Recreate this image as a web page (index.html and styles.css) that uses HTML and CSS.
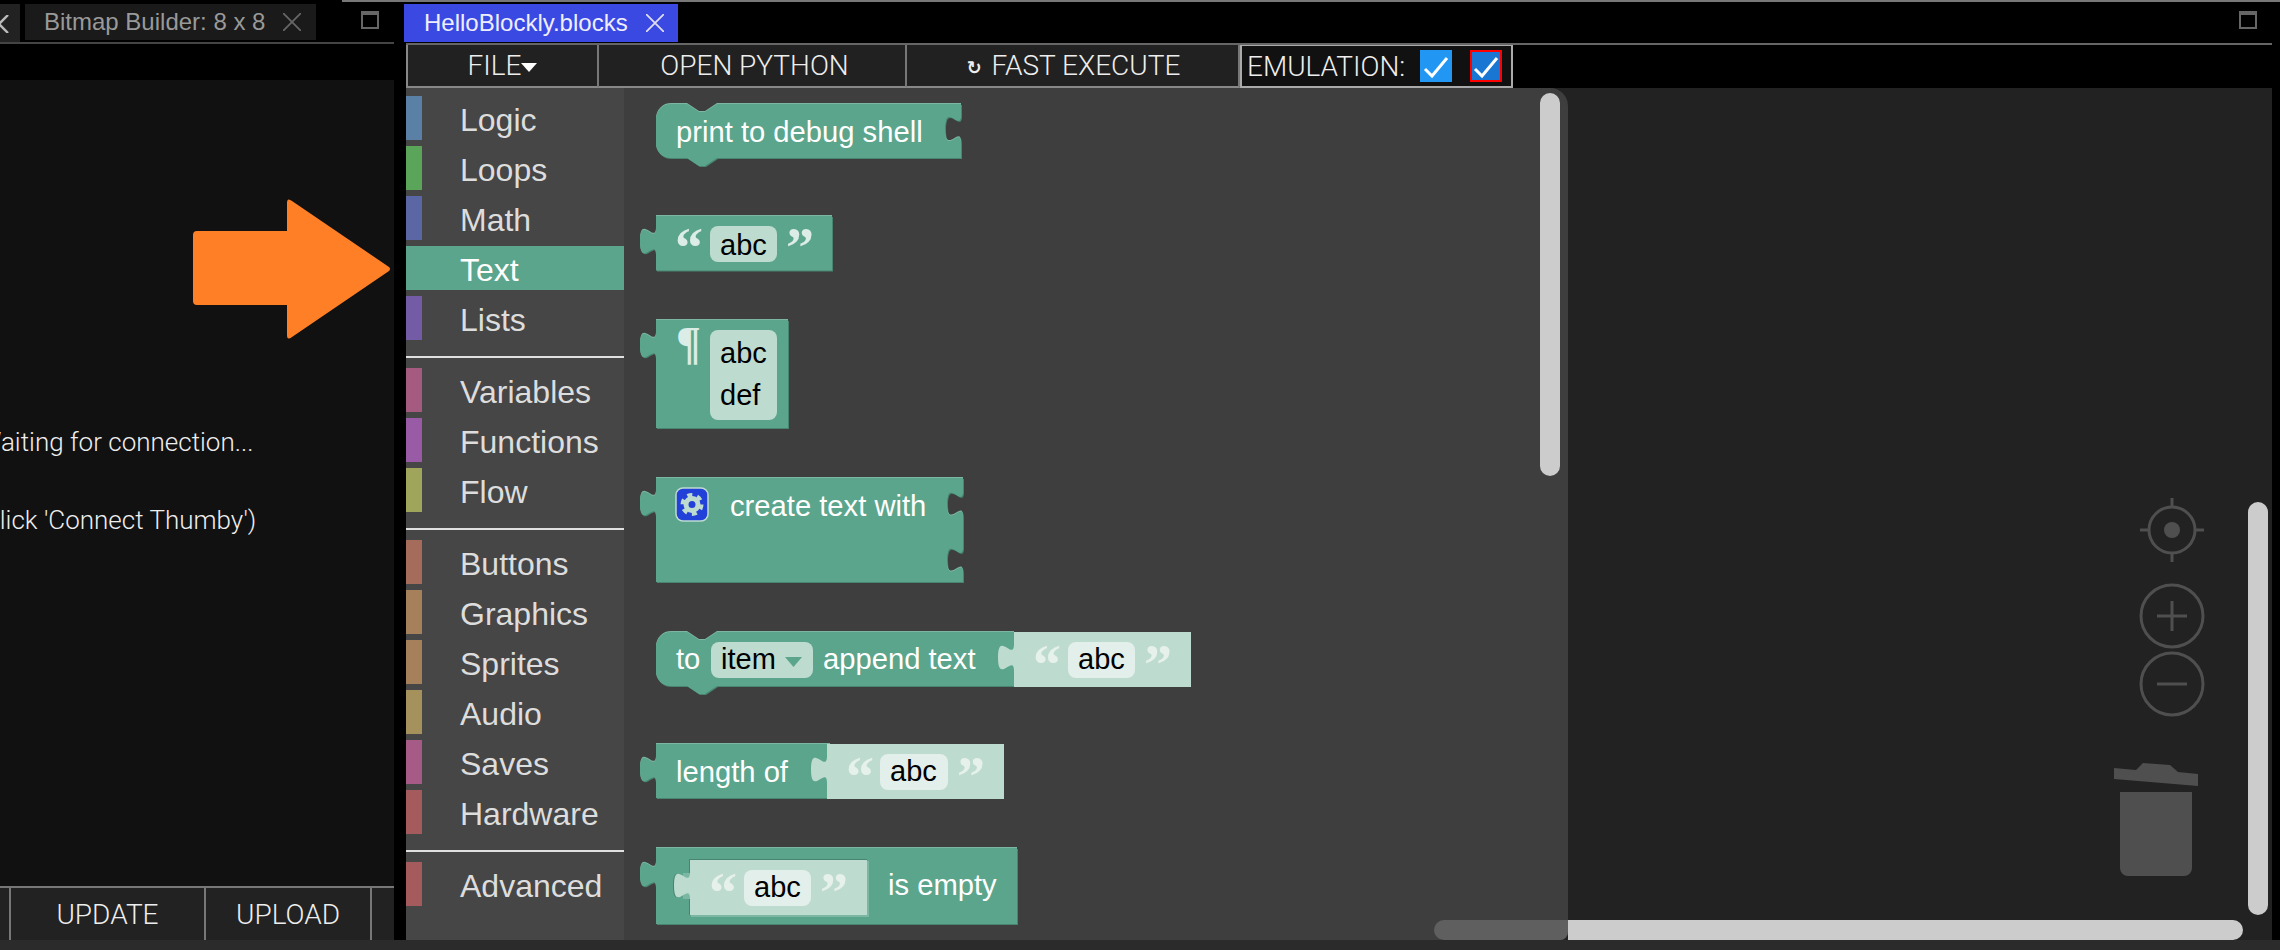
FILE: index.html
```html
<!DOCTYPE html>
<html lang="en">
<head>
<meta charset="utf-8">
<title>HelloBlockly.blocks</title>
<link rel="stylesheet" href="styles.css">
</head>
<body>
<div class="app">
  <div class="topline"></div>
  <main class="main">
    <section class="left">
      <div class="tabs left-tabs">
        <div class="tab-frag"><svg class="x-icon x-dim" viewBox="0 0 18 18"><path d="M-10 0L8 18M8 0L-10 18"/></svg></div>
        <div class="tab tab-dim"><span>Bitmap Builder: 8 x 8</span><svg class="x-icon x-dim" viewBox="0 0 18 18"><path d="M0 0L18 18M18 0L0 18"/></svg></div>
        <div class="maxbtn maxbtn-left"></div>
      </div>
      <div class="strip"></div>
      <div class="console">
        <p>Waiting for connection...</p>
        <p>(click 'Connect Thumby')</p>
      </div>
      <div class="actions">
        <div class="action action-stub"></div>
        <div class="action action-update">UPDATE</div>
        <div class="action action-upload">UPLOAD</div>
      </div>
    </section>

    <section class="right">
      <div class="tabs right-tabs">
        <div class="tab tab-active"><span>HelloBlockly.blocks</span><svg class="x-icon x-bright" viewBox="0 0 18 18"><path d="M0 0L18 18M18 0L0 18"/></svg></div>
        <div class="maxbtn maxbtn-right"></div>
      </div>
      <div class="toolbar">
        <div class="cell cell-file">FILE<span class="caret"></span></div>
        <div class="cell cell-python">OPEN PYTHON</div>
        <div class="cell cell-fast"><span class="redo">↻</span> FAST EXECUTE</div>
        <div class="cell cell-emu">
          <span class="emu-label">EMULATION:</span>
          <span class="check check-a"><svg viewBox="0 0 32 32"><path d="M5 19l7 7L27 8"/></svg></span>
          <span class="check check-b"><svg viewBox="0 0 28 28"><path d="M3 17l7 7L25 6"/></svg></span>
        </div>
      </div>
      <div class="editor">
        <nav class="toolbox">
          <div class="cat"><i class="sw c-logic"></i>Logic</div>
          <div class="cat"><i class="sw c-loops"></i>Loops</div>
          <div class="cat"><i class="sw c-math"></i>Math</div>
          <div class="cat cat-on">Text</div>
          <div class="cat"><i class="sw c-lists"></i>Lists</div>
          <div class="sep"></div>
          <div class="cat"><i class="sw c-vars"></i>Variables</div>
          <div class="cat"><i class="sw c-funcs"></i>Functions</div>
          <div class="cat"><i class="sw c-flow"></i>Flow</div>
          <div class="sep"></div>
          <div class="cat"><i class="sw c-btn"></i>Buttons</div>
          <div class="cat"><i class="sw c-gfx"></i>Graphics</div>
          <div class="cat"><i class="sw c-spr"></i>Sprites</div>
          <div class="cat"><i class="sw c-aud"></i>Audio</div>
          <div class="cat"><i class="sw c-sav"></i>Saves</div>
          <div class="cat"><i class="sw c-hw"></i>Hardware</div>
          <div class="sep"></div>
          <div class="cat"><i class="sw c-adv"></i>Advanced</div>
        </nav>

        <div class="flyout">
          <svg class="blocks" viewBox="624 88 944 852" width="944" height="852">
            <defs>
              <path id="b1" d="M656 119a15 15 0 0 1 15-15H687l12 8 6 0 12-8H961V115c0 18-16-14-16 14s16-4 16 14V158H717l-12 8-6 0-12-8H671a14 14 0 0 1-15-14z"/>
              <path id="b2" d="M656 216H832V270.500H656V255c0-18-16 14-16-13.500s16 4.500 16-13.500z"/>
              <path id="b3" d="M656 320H788V428H656V359c0-18-16 14-16-13.500s16 4.500 16-13.500z"/>
              <path id="b4" d="M656 478H963V491c0 18-16-14-16 13s16-4 16 13V547c0 18-16-14-16 13s16-4 16 13V582H656V517c0-18-16 14-16-13.500s16 4.500 16-13.500z"/>
              <path id="b5" d="M656 647a15 15 0 0 1 15-15H687l12 8 6 0 12-8H1014V686H717l-12 8-6 0-12-8H671a14 14 0 0 1-15-14z"/>
              <path id="b6" d="M656 744H830V798H656V783c0-18-16 14-16-13.500s16 4.500 16-13.500z"/>
              <path id="b7" d="M656 848H1017V924H656V888c0-18-16 14-16-13.500s16 4.500 16-13.500z"/>
            </defs>

            <use href="#b1" class="edge-dark" x="1" y="1"/><use href="#b1" class="edge-light" y="-1"/><use href="#b1" class="body"/>
            <text class="lbl" x="676" y="142">print to debug shell</text>

            <use href="#b2" class="edge-dark" x="1" y="1"/><use href="#b2" class="edge-light" y="-1"/><use href="#b2" class="body"/>
            <text class="quote" x="675" y="267">“</text>
            <rect class="field" x="710" y="226" width="67" height="36" rx="8"/>
            <text class="val" x="720" y="255">abc</text>
            <text class="quote" x="786" y="267">”</text>

            <use href="#b3" class="edge-dark" x="1" y="1"/><use href="#b3" class="edge-light" y="-1"/><use href="#b3" class="body"/>
            <text class="pilcrow" x="676" y="359">¶</text>
            <rect class="field" x="710" y="330" width="67" height="90" rx="8"/>
            <text class="val" x="720" y="363">abc</text>
            <text class="val" x="720" y="405">def</text>

            <use href="#b4" class="edge-dark" x="1" y="1"/><use href="#b4" class="edge-light" y="-1"/><use href="#b4" class="body"/>
            <rect class="mut" x="676" y="488" width="32" height="33" rx="7"/>
            <circle class="gear-teeth" cx="692" cy="504.500" r="9.500"/>
            <circle class="gear-ring" cx="692" cy="504.500" r="6"/>
            <text class="lbl" x="730" y="516">create text with</text>

            <use href="#b5" class="edge-dark" x="1" y="1"/><use href="#b5" class="edge-light" y="-1"/><use href="#b5" class="body"/>
            <text class="lbl" x="676" y="669">to</text>
            <rect class="field" x="711" y="642" width="102" height="36" rx="8"/>
            <text class="val" x="721" y="669">item</text>
            <path class="drop" d="M785 657H802L793.500 667z"/>
            <text class="lbl" x="823" y="669">append text</text>
            <path class="shadow" d="M1014 632H1191V687H1014V671c0-18-16 14-16-13.500s16 4.500 16-13.500z"/>
            <text class="quote quote-s" x="1033" y="684">“</text>
            <rect class="field-s" x="1068" y="642" width="67" height="36" rx="8"/>
            <text class="val" x="1078" y="669">abc</text>
            <text class="quote quote-s" x="1144" y="684">”</text>

            <use href="#b6" class="edge-dark" x="1" y="1"/><use href="#b6" class="edge-light" y="-1"/><use href="#b6" class="body"/>
            <text class="lbl" x="676" y="782">length of</text>
            <path class="shadow" d="M827 744H1004V799H827V783c0-18-16 14-16-13.500s16 4.500 16-13.500z"/>
            <text class="quote quote-s" x="846" y="796">“</text>
            <rect class="field-s" x="880" y="754" width="68" height="36" rx="8"/>
            <text class="val" x="890" y="781">abc</text>
            <text class="quote quote-s" x="957" y="796">”</text>

            <use href="#b7" class="edge-dark" x="1" y="1"/><use href="#b7" class="edge-light" y="-1"/><use href="#b7" class="body"/>
            <path class="inset" d="M689 859H867V915H689V899c0-18-16 14-16-13.500s16 4.500 16-13.500z"/>
            <path class="inset-light" d="M691 861H869V917H691V899H683V873H691z"/>
            <path class="shadow" d="M690 860H867V915H690V899c0-18-16 14-16-13.500s16 4.500 16-13.500z"/>
            <text class="quote quote-s" x="709" y="912">“</text>
            <rect class="field-s" x="744" y="870" width="67" height="36" rx="8"/>
            <text class="val" x="754" y="897">abc</text>
            <text class="quote quote-s" x="820" y="912">”</text>
            <text class="lbl" x="888" y="895">is empty</text>
          </svg>
          <div class="vbar vbar-fly"></div>
          <div class="hbar hbar-fly"></div>
        </div>

        <div class="workspace">
          <svg class="controls" viewBox="2100 480 110 410" width="110" height="410">
            <circle class="ring" cx="2172" cy="530" r="23"/>
            <circle class="dot" cx="2172" cy="530" r="8"/>
            <path class="ring" d="M2172 498v9M2172 553v9M2140 530h9M2195 530h9"/>
            <circle class="ring" cx="2172" cy="616" r="31"/>
            <path class="ring" d="M2157 616h30M2172 601v30"/>
            <circle class="ring" cx="2172" cy="684" r="31"/>
            <path class="ring" d="M2157 684h30"/>
            <path class="dot" d="M2114 768L2136 770L2143 763L2170 765L2178 772L2198 774V786L2114 779z"/>
            <path class="dot" d="M2120 792H2192V868a8 8 0 0 1-8 8H2128a8 8 0 0 1-8-8z"/>
          </svg>
          <div class="vbar vbar-ws"></div>
          <div class="hbar hbar-ws"></div>
        </div>
      </div>
    </section>
  </main>
  <footer class="footer"></footer>

  <svg class="arrow" viewBox="193 199 198 140" width="198" height="140">
    <path d="M197 231H287V203Q287 197 292 201L389 267Q391 269 389 271L292 337Q287 341 287 335V305H197Q193 305 193 301V235Q193 231 197 231z"/>
  </svg>
</div>
</body>
</html>
```
FILE: styles.css
```css
* { box-sizing: border-box; }
html { height: 950px; overflow: hidden; }
html, body { margin: 0; padding: 0; background: #000; }
body { width: 2280px; height: 950px; overflow: hidden; font-family: "Liberation Sans", Arial, sans-serif; }
.app { position: relative; width: 2280px; height: 950px; display: flex; flex-direction: column; overflow: hidden; }
.topline { position: absolute; left: 342px; right: 0; top: 0; height: 2px; background: #777; }
.main { flex: 1; display: flex; min-height: 0; gap: 10px; padding-right: 8px; }
.footer { height: 10px; background: #2b2b2b; flex: none; }

.left { width: 394px; display: flex; flex-direction: column; }
.tabs { display: flex; align-items: flex-start; padding-top: 4px; position: relative; }
.left-tabs { height: 44px; border-bottom: 2px solid #444; gap: 5px; }
.tab-frag { width: 20px; height: 38px; background: #222; overflow: hidden; padding-top: 11px; flex: none; }
.tab { display: flex; align-items: center; font-size: 24px; height: 38px; flex: none; }
.tab-dim { width: 291px; height: 36px; background: #1a1a1a; color: #999; padding-left: 19px; gap: 18px; }
.tab-active { width: 274px; background: #3b49e3; color: #eef; padding-left: 20px; gap: 18px; margin-left: -2px; }
.x-icon { width: 18px; height: 18px; flex: none; margin-top: 0; }
.x-icon path { fill: none; stroke-width: 1.8; }
.tab-frag .x-icon { margin-top: 0; display: block; }
.x-dim path { stroke: #666; }
.tab-frag .x-dim path { stroke: #bbb; stroke-width: 2.4; }
.x-bright path { stroke: #dde; }
.maxbtn { position: absolute; top: 11px; width: 18px; height: 18px; border: 2px solid #666; border-top-width: 4px; }
.maxbtn-left { left: 361px; }
.maxbtn-right { right: 15px; }
.strip { height: 36px; background: #000; }
.console { flex: 1; background: #111; color: #eee; font-family: Roboto, sans-serif; font-weight: 300; font-size: 26px; line-height: 39px; padding-top: 343px; overflow: hidden; }
.console p { margin: 0 0 39px -22px; white-space: nowrap; }
.actions { height: 54px; display: flex; background: #222; border-top: 2px solid #777; font-family: Roboto, sans-serif; font-weight: 300; font-size: 28px; color: #eee; }
.action { display: flex; align-items: center; justify-content: center; border-right: 2px solid #777; }
.action-stub { width: 11px; }
.action-update { width: 195px; }
.action-upload { width: 166px; }

.right { flex: 1; min-width: 0; display: flex; flex-direction: column; padding-left: 2px; }
.right-tabs { height: 43px; position: relative; }
.toolbar { height: 45px; display: flex; border-top: 2px solid #666; font-family: Roboto, sans-serif; font-weight: 300; font-size: 28px; color: #eee; }
.cell { background: #212121; display: flex; align-items: center; justify-content: center; border-right: 2px solid #777; border-bottom: 2px solid #888; white-space: pre; flex: none; }
.cell-file { width: 193px; border-left: 2px solid #888; }
.cell-python { width: 308px; padding-left: 5px; }
.cell-fast { width: 333px; padding-left: 2px; }
.cell-emu { width: 273px; background: #111; border: 2px solid #aaa; border-top-width: 1px; justify-content: flex-start; padding-left: 5px; }
.caret { width: 0; height: 0; border-left: 8px solid transparent; border-right: 8px solid transparent; border-top: 9px solid #fff; margin-top: 4px; }
.redo { font-size: 18px; font-family: "DejaVu Sans", sans-serif; font-weight: 700; margin-top: 4px; margin-right: 3px; }
.emu-label { margin-right: 15px; }
.check { width: 32px; height: 32px; display: block; flex: none; }
.check svg { display: block; width: 100%; height: 100%; }
.check path { fill: none; stroke: #fff; stroke-width: 3; }
.check-a { background: #2196f3; }
.check-b { background: #1976d2; border: 2px solid #f00; margin-left: 18px; }

.editor { flex: 1; min-height: 0; display: flex; background: #222; position: relative; }
.toolbox { width: 218px; flex: none; background: #464646; padding-top: 8px; display: flex; flex-direction: column; gap: 6px; }
.cat { height: 44px; display: flex; font-size: 32px; line-height: 44px; color: #ddd; padding-top: 2px; flex: none; }
.sw { width: 16px; height: 44px; margin: -2px 38px 0 0; flex: none; }
.cat-on { background: #5ba58c; color: #fff; padding-left: 54px; }
.sep { height: 2px; background: #e0e0e0; margin: 10px 0 4px; flex: none; }
.c-logic { background: #5b80a5; } .c-loops { background: #5ba55b; } .c-math { background: #5b67a5; }
.c-lists { background: #745ba5; } .c-vars { background: #a55b80; } .c-funcs { background: #995ba5; }
.c-flow { background: #9fa55b; } .c-btn { background: #a56b5b; } .c-gfx { background: #a5805b; }
.c-spr { background: #a5805b; } .c-aud { background: #a5915b; } .c-sav { background: #a55b85; }
.c-hw { background: #a55b5b; } .c-adv { background: #a55b5b; }

.flyout { width: 944px; flex: none; background: #3e3e3e; border-radius: 0 18px 8px 0; position: relative; }
.blocks { display: block; }
.workspace { flex: 1; position: relative; }
.controls { position: absolute; left: 532px; top: 392px; }
.body { fill: #5ba58c; }
.edge-dark { fill: #498470; }
.edge-light { fill: #7cb7a3; }
.lbl { font-size: 29.2px; fill: #fff; }
.val { font-size: 29px; fill: #000; }
.field { fill: #bedbd0; }
.field-s { fill: #e3efea; }
.shadow { fill: #bedbd0; }
.inset { fill: #498470; }
.inset-light { fill: #7cb7a3; }
.drop { fill: #5ba58c; }
.quote { font-family: "Liberation Serif", serif; font-weight: 700; font-size: 56px; fill: #dcece6; }
.quote-s { fill: #e6f1ec; }
.pilcrow { font-family: "Liberation Serif", serif; font-weight: 700; font-size: 46px; fill: #dcece6; }
.mut { fill: #2241d8; stroke: #bedbd0; stroke-width: 1.5; }
.gear-teeth { fill: none; stroke: #bedbd0; stroke-width: 4; stroke-dasharray: 5 4.950; }
.gear-ring { fill: none; stroke: #bedbd0; stroke-width: 5; }
.ring { fill: none; stroke: #4f4f4f; stroke-width: 3; }
.dot { fill: #4f4f4f; }
.vbar, .hbar { position: absolute; border-radius: 10px; }
.vbar-fly { left: 916px; top: 5px; width: 20px; height: 383px; background: #ccc; }
.hbar-fly { left: 810px; top: 832px; width: 134px; height: 20px; background: #5f5f5f; border-radius: 10px 0 8px 10px; }
.vbar-ws { left: 680px; top: 414px; width: 20px; height: 413px; background: #ccc; }
.hbar-ws { left: 0; top: 832px; width: 675px; height: 20px; background: #ccc; border-radius: 0 10px 10px 0; }
.arrow { position: absolute; left: 193px; top: 199px; }
.arrow path { fill: #ff7f27; }
```
